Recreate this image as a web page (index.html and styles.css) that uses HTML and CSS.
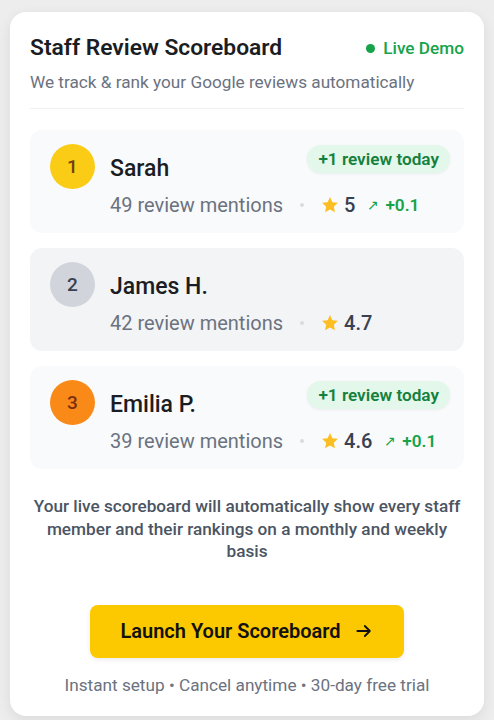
FILE: index.html
```html
<!DOCTYPE html>
<html lang="en">
<head>
    <meta charset="UTF-8">
    <meta name="viewport" content="width=device-width, initial-scale=1.0">
    <title>Staff Review Scoreboard</title>
    <link rel="stylesheet" href="styles.css">
</head>
<body>
    <div class="card">
        <div class="header">
            <div class="title-row">
                <h1>Staff Review Scoreboard</h1>
                <span class="live"><span class="live-dot"></span>Live Demo</span>
            </div>
            <p class="subtitle">We track &amp; rank your Google reviews automatically</p>
        </div>

        <div class="board">
            <div class="row">
                <div class="rank gold">1</div>
                <div class="info">
                    <div class="name">Sarah</div>
                    <div class="meta">
                        <span class="mentions">49 review mentions</span>
                        <span class="sep"></span>
                        <svg class="star" viewBox="0 0 24 24"><path d="M12 2.5l2.9 6.1 6.6.8-4.9 4.6 1.3 6.6L12 17.3l-5.9 3.3 1.3-6.6-4.9-4.6 6.6-.8z"/></svg>
                        <span class="score">5</span>
                        <span class="trend"><span class="arrow">&#8599;</span>+0.1</span>
                    </div>
                </div>
                <span class="badge">+1 review today</span>
            </div>

            <div class="row muted">
                <div class="rank silver">2</div>
                <div class="info">
                    <div class="name">James H.</div>
                    <div class="meta">
                        <span class="mentions">42 review mentions</span>
                        <span class="sep"></span>
                        <svg class="star" viewBox="0 0 24 24"><path d="M12 2.5l2.9 6.1 6.6.8-4.9 4.6 1.3 6.6L12 17.3l-5.9 3.3 1.3-6.6-4.9-4.6 6.6-.8z"/></svg>
                        <span class="score">4.7</span>
                    </div>
                </div>
            </div>

            <div class="row">
                <div class="rank bronze">3</div>
                <div class="info">
                    <div class="name">Emilia P.</div>
                    <div class="meta">
                        <span class="mentions">39 review mentions</span>
                        <span class="sep"></span>
                        <svg class="star" viewBox="0 0 24 24"><path d="M12 2.5l2.9 6.1 6.6.8-4.9 4.6 1.3 6.6L12 17.3l-5.9 3.3 1.3-6.6-4.9-4.6 6.6-.8z"/></svg>
                        <span class="score">4.6</span>
                        <span class="trend"><span class="arrow">&#8599;</span>+0.1</span>
                    </div>
                </div>
                <span class="badge">+1 review today</span>
            </div>
        </div>

        <p class="note">Your live scoreboard will automatically show every staff member and their rankings on a monthly and weekly basis</p>

        <div class="cta">
            <button type="button" class="launch">Launch Your Scoreboard
                <svg class="launch-arrow" viewBox="0 0 24 24"><path d="M4 12h15M13 6l6 6-6 6"/></svg>
            </button>
        </div>

        <p class="fine">Instant setup &bull; Cancel anytime &bull; 30-day free trial</p>
    </div>
</body>
</html>
```

FILE: styles.css
```css
body {
    font-family: Roboto, "Liberation Sans", Arial, sans-serif;
    background-color: #ededed;
    margin: 0;
    padding: 12px 10px 4px;
}
.card {
    background: #fff;
    border-radius: 16px;
    padding: 20px 20px 19px;
    box-shadow: 0 4px 14px rgba(0, 0, 0, 0.08);
}
.header {
    padding-bottom: 14px;
    border-bottom: 1px solid #f0f1f3;
}
.title-row {
    display: flex;
    justify-content: space-between;
    align-items: center;
}
h1 {
    margin: 0;
    font-size: 22.8px;
    line-height: 32px;
    font-weight: 600;
    color: #1a1d23;
}
.live {
    display: flex;
    align-items: center;
    gap: 8px;
    font-size: 17.2px;
    font-weight: 500;
    color: #16a34a;
}
.live-dot {
    width: 9px;
    height: 9px;
    border-radius: 50%;
    background: #16a34a;
}
.subtitle {
    margin: 6px 0 0;
    font-size: 17.2px;
    line-height: 24px;
    color: #6b7280;
}
.board {
    margin-top: 21px;
    display: flex;
    flex-direction: column;
    gap: 15px;
}
.row {
    position: relative;
    display: flex;
    align-items: flex-start;
    gap: 15px;
    padding: 14px 20px;
    background: #f9fafb;
    border-radius: 12px;
}
.row.muted {
    background: #f3f4f6;
}
.rank {
    flex: none;
    width: 45px;
    height: 45px;
    border-radius: 50%;
    display: flex;
    align-items: center;
    justify-content: center;
    font-size: 19px;
    font-weight: 500;
}
.rank.gold {
    background: #facc15;
    color: #713f12;
}
.rank.silver {
    background: #d1d5db;
    color: #374151;
}
.rank.bronze {
    background: #f98a17;
    color: #7c2d12;
}
.info {
    padding-top: 10px;
}
.name {
    font-size: 23px;
    line-height: 30px;
    font-weight: 500;
    color: #1a1d23;
}
.meta {
    margin-top: 7px;
    display: flex;
    align-items: center;
    height: 28px;
}
.mentions {
    font-size: 20px;
    color: #6b7280;
}
.sep {
    width: 4px;
    height: 4px;
    border-radius: 50%;
    background: #d8dbe0;
    margin: 0 16px 0 17px;
}
.star {
    width: 20px;
    height: 20px;
    fill: #fbbf24;
    margin-right: 4px;
}
.score {
    font-size: 20px;
    font-weight: 500;
    color: #374151;
}
.trend {
    margin-left: 12px;
    font-size: 17.2px;
    font-weight: 600;
    color: #16a34a;
}
.arrow {
    font-size: 14px;
    font-weight: 400;
    margin-right: 6px;
    vertical-align: 1px;
}
.badge {
    position: absolute;
    top: 15px;
    right: 14px;
    padding: 0 11px;
    line-height: 28px;
    border-radius: 14px;
    background: #e3f8ea;
    color: #15803d;
    font-size: 17.2px;
    font-weight: 600;
    box-shadow: 0 1px 3px rgba(0, 0, 0, 0.06);
}
.note {
    margin: 26px 0 0;
    text-align: center;
    font-size: 17.2px;
    line-height: 22.5px;
    font-weight: 500;
    color: #4b5563;
}
.cta {
    display: flex;
    justify-content: center;
    margin-top: 42px;
}
.launch {
    width: 314px;
    height: 53px;
    border: none;
    border-radius: 8px;
    background: #fcc800;
    color: #111;
    font-family: inherit;
    font-size: 20px;
    font-weight: 600;
    cursor: pointer;
    display: flex;
    align-items: center;
    justify-content: center;
    gap: 13px;
    box-shadow: 0 2px 5px rgba(0, 0, 0, 0.08);
}
.launch-arrow {
    width: 20px;
    height: 20px;
    fill: none;
    stroke: #111;
    stroke-width: 2.2;
    stroke-linecap: round;
    stroke-linejoin: round;
}
.fine {
    margin: 15px 0 0;
    text-align: center;
    font-size: 17.2px;
    line-height: 24px;
    color: #6b7280;
}
```
